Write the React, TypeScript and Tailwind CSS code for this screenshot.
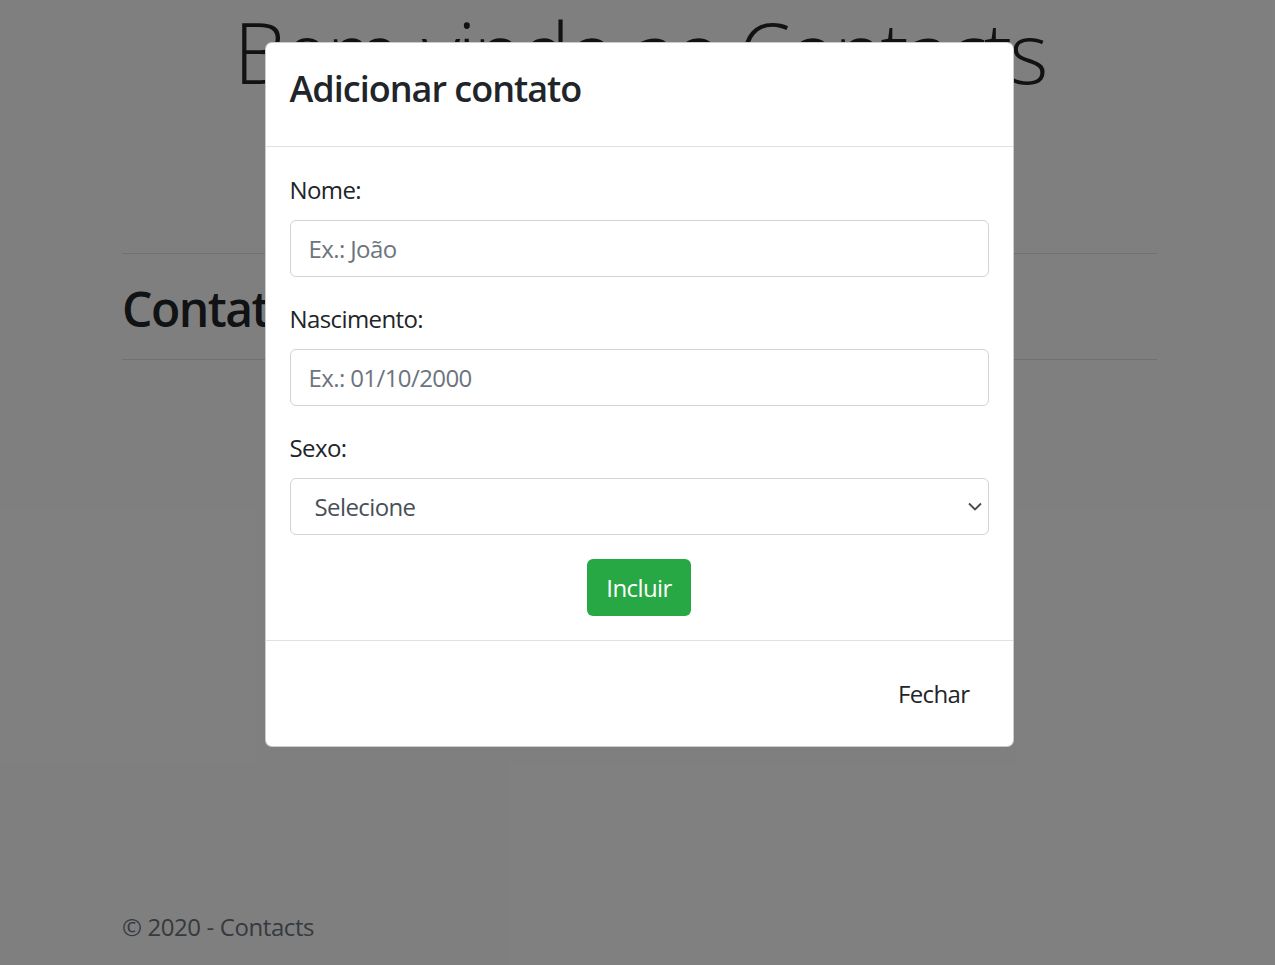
export default function App() {
  return (
    <div className="relative min-h-[965px] overflow-hidden bg-white font-['Open_Sans',sans-serif] text-[#212529]">
      {/* Page beneath the modal */}
      <div className="pl-[4px]">
        <div className="mx-auto w-[1035px]">
          <div className="h-[253px] pt-[2px]">
            <h1 className="text-center text-[84px] font-light leading-[100px] tracking-[-3px]">Bem-vindo ao Contacts</h1>
          </div>
          <div className="border-t border-[#dee2e6]" />
          <div className="h-[105px] pt-[26px]">
            <h2 className="text-[48px] font-semibold leading-[1.2] tracking-[-1.5px]">Contatos</h2>
          </div>
          <div className="border-t border-[#dee2e6]" />
          <div className="h-[549px]" />
          <footer className="text-[24px] leading-[36px] tracking-[-0.4px] text-[#6c757d]">© 2020 - Contacts</footer>
        </div>
      </div>

      {/* Backdrop + modal */}
      <div className="absolute inset-0 bg-black/50">
        <div className="flex justify-center pl-[3px] pt-[42px]">
          <div className="w-[749px] rounded-[7px] border border-black/20 bg-white tracking-[-0.6px]">
            <div className="border-b border-[#dee2e6] px-[24px] pb-[30px] pt-[19px]">
              <h5 className="text-[36px] font-semibold leading-[54px] tracking-[-1px]">Adicionar contato</h5>
            </div>
            <div className="px-[24px] pb-[24px] pt-[25px]">
              <div className="mb-[24px]">
                <label className="mb-[12px] block text-[24px] leading-[36px]">Nome:</label>
                <div className="flex h-[57px] items-center rounded-[6px] border border-[#ced4da] px-[18px] text-[24px] text-[#6c757d]">
                  Ex.: João
                </div>
              </div>
              <div className="mb-[24px]">
                <label className="mb-[12px] block text-[24px] leading-[36px]">Nascimento:</label>
                <div className="flex h-[57px] items-center rounded-[6px] border border-[#ced4da] px-[18px] text-[24px] text-[#6c757d]">
                  Ex.: 01/10/2000
                </div>
              </div>
              <div className="mb-[24px]">
                <label className="mb-[12px] block text-[24px] leading-[36px]">Sexo:</label>
                <div className="flex h-[57px] items-center justify-between rounded-[6px] border border-[#ced4da] pl-[24px] pr-[6px] text-[24px] text-[#495057]">
                  <span>Selecione</span>
                  <svg width="14" height="9" viewBox="0 0 14 9">
                    <path d="M1 1.5 L7 7.5 L13 1.5" fill="none" stroke="#4a4a4a" strokeWidth="1.8" />
                  </svg>
                </div>
              </div>
              <div className="flex justify-center">
                <button className="h-[57px] rounded-[6px] bg-[#28a745] px-[19px] text-[24px] leading-[36px] text-white">
                  Incluir
                </button>
              </div>
            </div>
            <div className="flex justify-end border-t border-[#dee2e6] p-[18px]">
              <button className="m-[6px] h-[57px] rounded-[6px] px-[19px] text-[24px] leading-[36px] text-[#212529]">
                Fechar
              </button>
            </div>
          </div>
        </div>
      </div>
    </div>
  );
}
